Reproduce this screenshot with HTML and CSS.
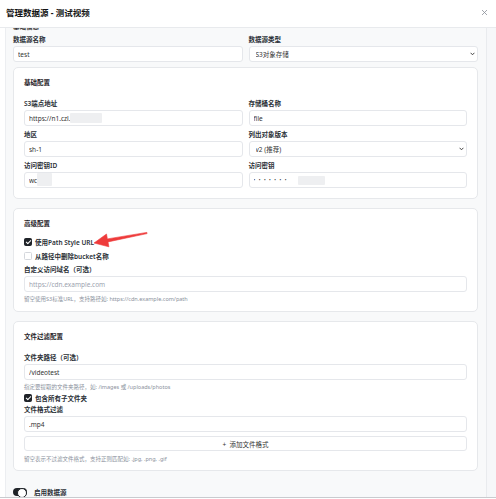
FILE: index.html
```html
<!DOCTYPE html>
<html lang="zh-CN">
<head>
    <meta charset="UTF-8">
    <meta name="viewport" content="width=device-width, initial-scale=1.0">
    <title>管理数据源 - 测试视频</title>
    <link rel="stylesheet" href="styles.css">
</head>
<body>
    <div class="modal">
        <div class="modal-header">
            <h2>管理数据源 - 测试视频</h2>
            <button class="close-btn" type="button" aria-label="关闭">
                <svg width="7" height="7" viewBox="0 0 7 7"><path d="M1 1L6 6M6 1L1 6" stroke="#8a8f98" stroke-width="0.8"/></svg>
            </button>
        </div>

        <div class="modal-body">
            <div class="scroll-area">
                <div class="section-caption">基础信息</div>

                <div class="grid-2 top-row">
                    <div class="field">
                        <label for="dsName">数据源名称</label>
                        <input type="text" id="dsName" value="test">
                    </div>
                    <div class="field">
                        <label for="dsType">数据源类型</label>
                        <div class="select-wrap">
                            <select id="dsType"><option>S3对象存储</option></select>
                            <svg class="chevron" viewBox="0 0 5 4"><path d="M0.6 0.8L2.5 2.8L4.4 0.8" fill="none" stroke="#333" stroke-width="0.9"/></svg>
                        </div>
                    </div>
                </div>

                <div class="card">
                    <h3>基础配置</h3>
                    <div class="grid-2">
                        <div class="field">
                            <label for="endpoint">S3端点地址</label>
                            <div class="masked">
                                <input type="text" id="endpoint" value="https://n1.czl.">
                                <span class="redact redact-endpoint"></span>
                            </div>
                        </div>
                        <div class="field">
                            <label for="bucket">存储桶名称</label>
                            <input type="text" id="bucket" value="file">
                        </div>
                        <div class="field">
                            <label for="region">地区</label>
                            <input type="text" id="region" value="sh-1">
                        </div>
                        <div class="field">
                            <label for="listVersion">列出对象版本</label>
                            <div class="select-wrap">
                                <select id="listVersion"><option>v2 (推荐)</option><option>v1</option></select>
                                <svg class="chevron" viewBox="0 0 5 4"><path d="M0.6 0.8L2.5 2.8L4.4 0.8" fill="none" stroke="#333" stroke-width="0.9"/></svg>
                            </div>
                        </div>
                        <div class="field">
                            <label for="accessKey">访问密钥ID</label>
                            <div class="masked">
                                <input type="text" id="accessKey" value="wc">
                                <span class="redact redact-key"></span>
                            </div>
                        </div>
                        <div class="field">
                            <label for="secretKey">访问密钥</label>
                            <div class="masked">
                                <input type="password" id="secretKey" class="secret" value="1234567">
                                <span class="redact redact-secret"></span>
                            </div>
                        </div>
                    </div>
                </div>

                <div class="card card-advanced">
                    <h3>高级配置</h3>
                    <label class="check-row"><input type="checkbox" class="checkbox" checked>使用Path Style URL</label>
                    <label class="check-row"><input type="checkbox" class="checkbox">从路径中删除bucket名称</label>
                    <div class="field">
                        <label for="customDomain">自定义访问域名（可选）</label>
                        <input type="text" id="customDomain" placeholder="https://cdn.example.com">
                        <p class="hint">留空使用S3标准URL，支持路径如: https://cdn.example.com/path</p>
                    </div>
                </div>

                <div class="card card-filter">
                    <h3>文件过滤配置</h3>
                    <div class="field">
                        <label for="folderPath">文件夹路径（可选）</label>
                        <input type="text" id="folderPath" value="/videotest">
                        <p class="hint">指定要提取的文件夹路径，如: /images 或 /uploads/photos</p>
                    </div>
                    <label class="check-row tight"><input type="checkbox" class="checkbox" checked>包含所有子文件夹</label>
                    <div class="field">
                        <label for="ext1">文件格式过滤</label>
                        <input type="text" id="ext1" value=".mp4">
                        <button type="button" class="add-btn">+&nbsp;&nbsp;添加文件格式</button>
                        <p class="hint hint-last">留空表示不过滤文件格式，支持正则匹配如: .jpg, .png, .gif</p>
                    </div>
                </div>

                <div class="toggle-row"><span class="switch"></span>启用数据源</div>
            </div>
            <div class="scrollbar"></div>
        </div>

        <div class="modal-footer"></div>

        <!-- red annotation arrow pointing at the Path Style option -->
        <svg class="annotation-arrow" width="62" height="24" viewBox="0 0 62 24">
            <path d="M4 15L16.5 6L17.4 10.9L56.9 4.4L57.1 5.6L18 13.9L18.9 18.8Z" fill="#ee3b3b" stroke="#ee3b3b" stroke-width="0.6" stroke-linejoin="round"/>
        </svg>
    </div>
</body>
</html>
```

FILE: styles.css
```css
* {
    box-sizing: border-box;
}

body {
    margin: 0;
    font-family: "Noto Sans", "Noto Sans CJK SC", sans-serif;
    color: #1f2329;
    background: #fff;
}

.modal {
    position: relative;
    width: 496px;
    height: 499px;
    display: flex;
    flex-direction: column;
    overflow: hidden;
}

.modal-header {
    height: 28px;
    flex: none;
    display: flex;
    align-items: center;
    justify-content: space-between;
    padding: 0 8px 3px 6px;
    border-bottom: 1px solid #e8eaed;
}

.modal-header h2 {
    margin: 0;
    font-size: 8.5px;
    font-weight: 700;
    color: #111;
}

.close-btn {
    border: none;
    background: none;
    padding: 0;
    width: 7px;
    height: 7px;
    display: flex;
}

.modal-body {
    flex: 1;
    display: flex;
    min-height: 0;
}

.scroll-area {
    flex: 1;
    margin-left: 5px;
    border-left: 1px solid #eceef1;
    background: #f8f9fa;
    padding: 0 8px 0 7px;
    overflow: hidden;
}

.scrollbar {
    width: 10px;
    flex: none;
    background: #f6f7f9;
    border-left: 1px solid #e9ebee;
}

.modal-footer {
    height: 2px;
    flex: none;
    border-top: 1px solid #c9cbcf;
}

.section-caption {
    font-size: 6.5px;
    line-height: 9px;
    font-weight: 700;
    color: #333;
    margin: -6px 0 4px;
}

.grid-2 {
    display: grid;
    grid-template-columns: 1fr 1fr;
    gap: 4px 6px;
}

.top-row {
    margin-bottom: 5px;
}

.field label {
    display: block;
    font-size: 6.5px;
    line-height: 9px;
    font-weight: 600;
    margin-bottom: 2px;
    color: #2a2f36;
}

input[type="text"], input[type="password"], select {
    display: block;
    width: 100%;
    height: 16px;
    border: 1px solid #e5e7eb;
    border-radius: 3px;
    background: #fff;
    font-family: inherit;
    font-size: 6.5px;
    color: #333;
    padding: 0 4px;
    margin: 0;
    outline: none;
}

input::placeholder {
    color: #9ca3af;
}

select {
    appearance: none;
    padding-left: 6px;
}

.select-wrap, .masked {
    position: relative;
}

.chevron {
    position: absolute;
    right: 3px;
    top: 6px;
    width: 5px;
    height: 4px;
}

.redact {
    position: absolute;
    background: #eeeff1;
    border-radius: 1px;
}

.redact-endpoint {
    left: 46px;
    top: 3px;
    width: 32px;
    height: 10px;
}

.redact-key {
    left: 13px;
    top: 1px;
    width: 15px;
    height: 13px;
}

.redact-secret {
    left: 49px;
    top: 4px;
    width: 27px;
    height: 9px;
}

.secret {
    letter-spacing: 3.5px;
    font-size: 4.5px !important;
}

.card {
    background: #fff;
    border: 1px solid #e6e8eb;
    border-radius: 5px;
    padding: 10px;
    margin-bottom: 9px;
}

.card h3 {
    margin: 0 0 12px;
    font-size: 6.5px;
    line-height: 9px;
    font-weight: 700;
    color: #1f2329;
}

.card-advanced {
    padding-bottom: 8px;
}

.card-advanced h3 {
    margin-bottom: 9px;
}

.card-filter {
    padding-bottom: 7px;
}

.check-row {
    display: flex;
    align-items: center;
    gap: 3px;
    height: 10px;
    margin-bottom: 4px;
    font-size: 6.5px;
    font-weight: 600;
    color: #2a2f36;
}

.check-row.tight {
    margin: 2px 0;
}

.checkbox {
    appearance: none;
    position: relative;
    width: 8px;
    height: 8px;
    margin: 0;
    border: 1px solid #d4d7dc;
    border-radius: 1.5px;
    background: #fff;
    flex: none;
}

.checkbox:checked {
    background: #1f2328;
    border-color: #1f2328;
}

.checkbox:checked::after {
    content: "";
    position: absolute;
    left: 1.9px;
    top: 0.4px;
    width: 2px;
    height: 4px;
    border: solid #fff;
    border-width: 0 1px 1px 0;
    transform: rotate(45deg);
}

.hint {
    margin: 3px 0 0;
    font-size: 5.5px;
    line-height: 8px;
    color: #8a919c;
}

.add-btn {
    display: block;
    width: 100%;
    height: 15px;
    margin-top: 4px;
    border: 1px solid #e5e7eb;
    border-radius: 3px;
    background: #fff;
    font-family: inherit;
    font-size: 6.5px;
    color: #333;
    padding: 0;
}

.hint-last {
    margin-top: 4px;
}

.toggle-row {
    display: flex;
    align-items: center;
    gap: 7px;
    height: 10px;
    margin-top: 16px;
    font-size: 6.5px;
    font-weight: 600;
    color: #2a2f36;
}

.switch {
    position: relative;
    width: 14px;
    height: 8px;
    border-radius: 4px;
    background: #1f2328;
}

.switch::after {
    content: "";
    position: absolute;
    right: 0;
    top: 0;
    width: 8px;
    height: 8px;
    border-radius: 50%;
    background: #fff;
    border: 1px solid #1f2328;
}

.annotation-arrow {
    position: absolute;
    left: 90px;
    top: 228px;
    pointer-events: none;
}
```
